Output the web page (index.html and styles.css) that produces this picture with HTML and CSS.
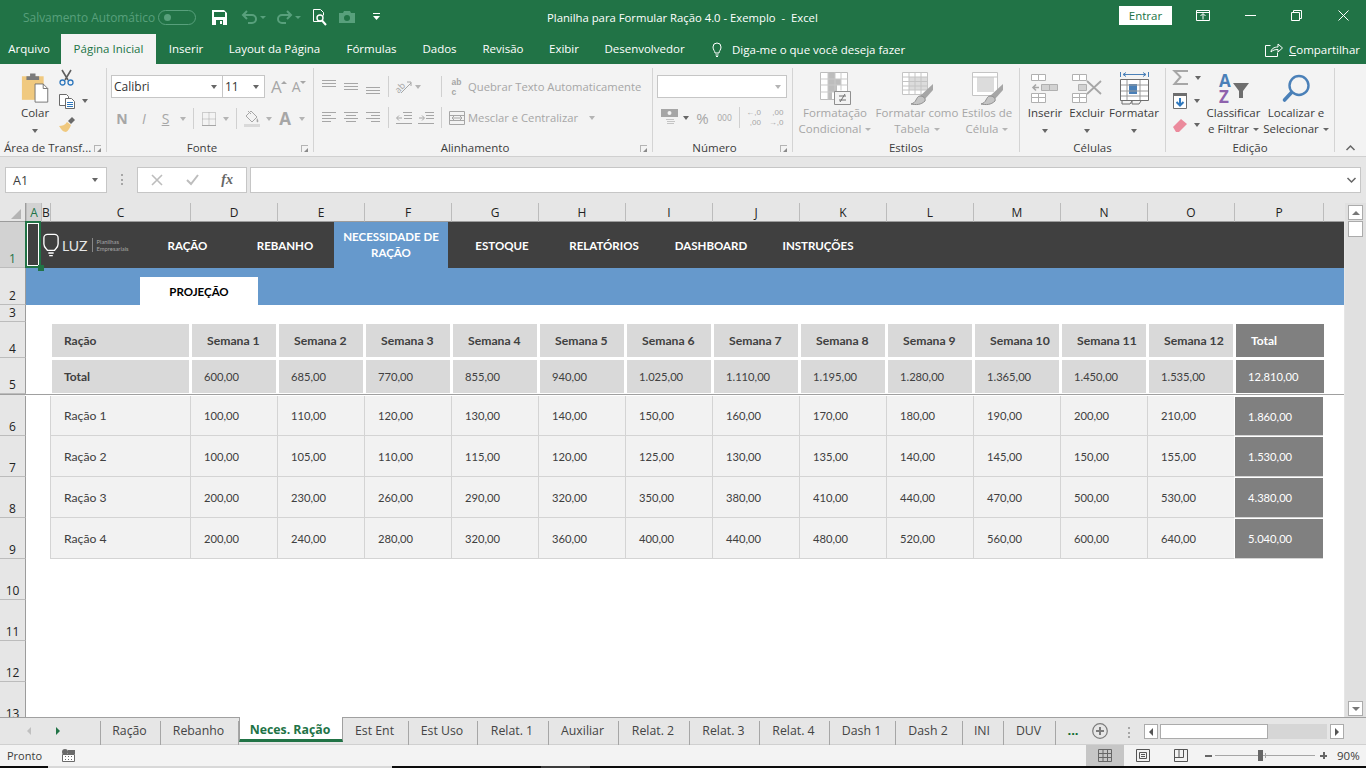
FILE: index.html
```html
<!DOCTYPE html>
<html>
  <head>
    <meta http-equiv="Content-Type" content="text/html; charset=utf-8">
    <title>Planilha para Formular Ração 4.0 - Exemplo - Excel</title>
    <link rel="stylesheet" href="styles.css">
  </head>
  <body>
    <div class="titlebar">
      <div class="quick">
        <span class="autosave">Salvamento Automático</span>
        <span class="toggle"><i></i></span>
        <svg class="q-save" width="15" height="15" viewBox="0 0 15 15"><path fill="#fff" fill-rule="evenodd" d="M0 0h12l3 3v12H0zM2 2v5h11V2zM4 10v5h7v-5zM8 11h2v3H8z"/></svg>
        <svg class="q-undo" width="17" height="14" viewBox="0 0 17 14"><path fill="none" stroke="#58a07c" stroke-width="2" d="M6 1 2 5l4 4M2 5h9a4 4 0 0 1 0 8H7"/></svg>
        <i class="caret dim q-c1"></i>
        <svg class="q-redo" width="17" height="14" viewBox="0 0 17 14"><path fill="none" stroke="#58a07c" stroke-width="2" d="m11 1 4 4-4 4M15 5H6a4 4 0 0 0 0 8h4"/></svg>
        <i class="caret dim q-c2"></i>
        <svg class="q-print" width="15" height="17" viewBox="0 0 15 17"><path fill="none" stroke="#fff" d="M9.500 12.500h-8V.5h7l3 3v3"/><circle cx="8" cy="9" r="3" fill="none" stroke="#fff" stroke-width="1.400"/><path stroke="#fff" stroke-width="2" d="m10 11.500 4 4.500"/></svg>
        <svg class="q-cam" width="16" height="12" viewBox="0 0 16 12"><path fill="#58a07c" fill-rule="evenodd" d="M0 2h4l1-2h6l1 2h4v10H0zM8 4a3 3 0 1 0 0 6 3 3 0 0 0 0-6z"/></svg>
        <svg class="q-more" width="7" height="8" viewBox="0 0 7 8"><path fill="#fff" d="M0 0h7v1H0zM0 3h7L3.500 7z"/></svg>
      </div>
      <div class="doc-title">Planilha para Formular Ração 4.0 - Exemplo&nbsp; -&nbsp; Excel</div>
      <div class="win">
        <span class="login">Entrar</span>
        <svg class="w-display" width="14" height="11" viewBox="0 0 14 11"><path fill="none" stroke="#fff" d="M.5.500h13v10H.5zM.5 2.500h13M7 9.500V4M4.500 6 7 3.500 9.500 6"/></svg>
        <svg class="w-min" width="11" height="1" viewBox="0 0 11 1"><path fill="#fff" d="M0 0h11v1H0z"/></svg>
        <svg class="w-max" width="11" height="11" viewBox="0 0 11 11"><path fill="none" stroke="#fff" d="M.5 2.500h8v8h-8zM2.500 2.500v-2h8v8h-2"/></svg>
        <svg class="w-close" width="11" height="11" viewBox="0 0 11 11"><path fill="none" stroke="#fff" d="m.5.500 10 10M10.500.500l-10 10"/></svg>
      </div>
    </div>

    <div class="menubar">
      <span class="file-tab">Arquivo</span>
      <span class="tab-on">Página Inicial</span>
      <span>Inserir</span>
      <span>Layout da Página</span>
      <span>Fórmulas</span>
      <span>Dados</span>
      <span>Revisão</span>
      <span>Exibir</span>
      <span>Desenvolvedor</span>
      <div class="tell">
        <svg width="14" height="15" viewBox="0 0 14 15"><path fill="none" stroke="#fff" d="M9 11H5c0-2-2-3-2-6a4 4 0 0 1 8 0c0 3-2 4-2 6zM5.500 13h3M6 14.500h2"/></svg>
        <span>Diga-me o que você deseja fazer</span>
      </div>
      <div class="share">
        <svg width="18" height="15" viewBox="0 0 18 15"><path fill="none" stroke="#fff" d="M5.500 3.500h-5v11h12v-4M6 10c0-3 3-5 7-5V2l4.500 4L13 10V7.500C10 7.500 8 8 6 10z"/></svg>
        <span><u>C</u>ompartilhar</span>
      </div>
    </div>

    <div class="ribbon">
      <div class="group g-clip">
        <div class="group-body clip-body">
          <div class="big colar">
            <svg width="29" height="30" viewBox="0 0 32 33"><path fill="#f0c97f" d="M1 3h24v26H1z"/><path fill="#7b7b7b" d="M6 3h14v4H6zM10 0h6v3h-6z"/><path fill="#fff" stroke="#6e6e6e" d="M15.500 11.500h9l5 5v15h-14z"/><path fill="none" stroke="#6e6e6e" d="M24.500 11.500v5h5"/></svg>
            <p>Colar</p>
            <p><i class="caret"></i></p>
          </div>
          <div class="small-col">
            <div class="small">
              <svg width="15" height="16" viewBox="0 0 15 16"><path stroke="#5e5e5e" stroke-width="1.600" d="M3 0l6 10M12 0 6 10"/><g fill="none" stroke="#2f78bd" stroke-width="1.300"><circle cx="3.500" cy="12.500" r="2.500"/><circle cx="11.500" cy="12.500" r="2.500"/></g></svg>
            </div>
            <div class="small">
              <svg width="16" height="15" viewBox="0 0 16 15"><path fill="#fff" stroke="#6a6a6a" d="M.5.500h7l2 2v9h-9z"/><path fill="#fff" stroke="#6a6a6a" d="M6.500 4.500h6l3 3v7h-9z"/><path stroke="#2f78bd" d="M8 8.500h6M8 10.500h6M8 12.500h6"/></svg>
              <i class="caret"></i>
            </div>
            <div class="small">
              <svg width="16" height="15" viewBox="0 0 16 15"><path fill="#6a6a6a" d="m9 4 4-4 3 3-4 4z"/><path fill="#f0c97f" d="M0 9c3 0 6-1 8-4l4 3c-1 3-3 6-5 7-3 0-5-3-7-6z"/></svg>
            </div>
          </div>
        </div>
        <div class="group-label label-left">Área de Transf...<i class="launch"></i></div>
      </div>

      <div class="group g-font">
        <div class="group-body rows">
          <div class="row font-row">
            <div class="combo font-name"><span>Calibri</span><i class="caret"></i></div>
            <div class="combo font-size"><span>11</span><i class="caret"></i></div>
            <div class="font-grow">
              <span class="off grow-a">A<i class="tri-grow"></i></span>
              <span class="off shrink-a">A<i class="tri-shrink"></i></span>
            </div>
          </div>
          <div class="row font-tools">
            <b class="off">N</b><em class="off">I</em><u class="off s-mark">S</u><i class="caret off"></i>
            <i class="vsep"></i>
            <svg width="14" height="14" viewBox="0 0 14 14"><path fill="none" stroke="#a6a6a6" stroke-dasharray="1 1" d="M.5.500h13v13H.5zM7 .5v13M.5 7h13"/><path stroke="#a6a6a6" d="M0 13.500h14"/></svg>
            <i class="caret off"></i>
            <i class="vsep"></i>
            <svg width="16" height="17" viewBox="0 0 16 17"><path fill="none" stroke="#a6a6a6" d="m7 1 6 6-5 5-6-6zM4 1l3 3"/><path fill="#a6a6a6" d="M13 8c1 2 2 3 1 4s-2 0-1-4z"/><path fill="#d9d9d9" d="M0 14h16v3H0z"/></svg>
            <i class="caret off"></i>
            <b class="off big-a">A</b>
            <i class="caret off"></i>
          </div>
        </div>
        <div class="group-label with-launch">Fonte<i class="launch"></i></div>
      </div>

      <div class="group g-align">
        <div class="group-body rows">
          <div class="row align-top">
            <svg class="up3" width="14" height="8" viewBox="0 0 14 8"><path stroke="#a6a6a6" d="M0 .5h14M0 3.500h14M0 6.500h14"/></svg>
            <svg width="14" height="8" viewBox="0 0 14 8"><path stroke="#a6a6a6" d="M0 .5h14M0 3.500h14M0 6.500h14"/></svg>
            <svg class="down3" width="14" height="8" viewBox="0 0 14 8"><path stroke="#a6a6a6" d="M0 .5h14M0 3.500h14M0 6.500h14"/></svg>
            <i class="vsep"></i>
            <svg width="17" height="15" viewBox="0 0 17 15"><text x="0" y="12" transform="rotate(-45 5 9)" class="orient">ab</text><path fill="none" stroke="#a6a6a6" d="M6 14 16 4M12 3h4v4"/></svg>
            <i class="caret off start"></i>
            <i class="vsep"></i>
            <span class="abc off">ab<br>c</span>
            <span class="off wrap-text">Quebrar Texto Automaticamente</span>
          </div>
          <div class="row align-bottom">
            <svg width="14" height="11" viewBox="0 0 14 11"><path stroke="#a6a6a6" d="M0 .5h14M0 3.500h9M0 6.500h14M0 9.500h9"/></svg>
            <svg width="14" height="11" viewBox="0 0 14 11"><path stroke="#a6a6a6" d="M0 .5h14M2 3.500h10M0 6.500h14M2 9.500h10"/></svg>
            <svg width="14" height="11" viewBox="0 0 14 11"><path stroke="#a6a6a6" d="M0 .5h14M5 3.500h9M0 6.500h14M5 9.500h9"/></svg>
            <i class="vsep"></i>
            <svg width="16" height="12" viewBox="0 0 16 12"><path fill="none" stroke="#a6a6a6" d="M7 .5h9M8 3.500h8M8 6.500h8M0 11.500h16M6 6H1M3 3.500 .5 6 3 8.500"/></svg>
            <svg width="16" height="12" viewBox="0 0 16 12"><path fill="none" stroke="#a6a6a6" d="M7 .5h9M8 3.500h8M8 6.500h8M0 11.500h16M1 6h5M4 3.500 6.500 6 4 8.500"/></svg>
            <i class="vsep"></i>
            <svg width="16" height="14" viewBox="0 0 16 14"><path fill="none" stroke="#a6a6a6" d="M.5.500h15v13H.5zM.5 4.500h15M.5 9.500h15M3 7h10M5 5 3 7l2 2M11 5l2 2-2 2"/></svg>
            <span class="merge off wrap-text">Mesclar e Centralizar<i class="caret off"></i></span>
          </div>
        </div>
        <div class="group-label with-launch">Alinhamento<i class="launch"></i></div>
      </div>

      <div class="group g-num">
        <div class="group-body rows">
          <div class="row num-top">
            <div class="combo num-format"><span></span><i class="caret off"></i></div>
          </div>
          <div class="row num-tools">
            <svg width="17" height="17" viewBox="0 0 17 17"><path fill="#a6a6a6" fill-rule="evenodd" d="M0 0h17v8H0zM8.500 2a2 2 0 1 0 0 4 2 2 0 0 0 0-4z"/><path stroke="#c4c4c4" d="M5 10.500h8M6 12.500h8M6 14.500h7"/></svg>
            <i class="caret"></i>
            <span class="percent off">%</span>
            <span class="zeros off">000</span>
            <i class="vsep"></i>
            <span class="decimals off">←,0<br>,00</span>
            <span class="decimals off">,00<br>→,0</span>
          </div>
        </div>
        <div class="group-label with-launch">Número<i class="launch"></i></div>
      </div>

      <div class="group g-styles">
        <div class="group-body big-row">
          <div class="big off">
            <svg width="31" height="33" viewBox="0 0 31 33"><path fill="#fff" stroke="#bdbdbd" d="M.5.500h27v27H.5z"/><path fill="#bdbdbd" d="M8 1h7v6H8zM8 7h13v6H8zM8 13h9v7H8zM8 20h4v7H8z"/><path stroke="#c9c9c9" d="M8 .5v27M15 .5v18M21 .5v18M.5 7h27M.5 13h27M.5 20h14"/><path fill="#f3f3f3" stroke="#8f8f8f" d="M14.500 19.500h16v13h-16z"/><path stroke="#6f6f6f" d="M19 24h7M19 28h7M25 22l-5 8"/></svg>
            <p>Formatação</p>
            <p>Condicional<i class="caret off mini"></i></p>
          </div>
          <div class="big off">
            <svg width="31" height="33" viewBox="0 0 31 33"><use href="#table-brush"/></svg>
            <p>Formatar como</p>
            <p>Tabela<i class="caret off mini"></i></p>
          </div>
          <div class="big off">
            <svg width="31" height="33" viewBox="0 0 31 33"><path fill="#fff" stroke="#c4c4c4" d="M.5.500h25v23H.5z"/><path fill="#dcdcdc" d="M5 5h17v15H5z"/><path stroke="#c4c4c4" d="M.5 5h25"/><use href="#brush"/></svg>
            <p>Estilos de</p>
            <p>Célula<i class="caret off mini"></i></p>
          </div>
        </div>
        <div class="group-label">Estilos</div>
      </div>

      <div class="group g-cells">
        <div class="group-body big-row">
          <div class="big">
            <svg width="28" height="29" viewBox="0 0 28 29"><g fill="#fff" stroke="#b0b0b0"><path d="M.5.500h7v6h-7zM7.500.5h7v6h-7z"/><path fill="#d2d2d2" d="M10.500 10.500h8v6h-8zM18.500 10.500h8v6h-8z"/><path d="M.5 19.500h7v4h-7zM7.500 19.500h7v4h-7zM.5 23.500h7v5h-7zM7.500 23.500h7v5h-7z"/></g><path fill="none" stroke="#a6a6a6" stroke-width="1.600" d="M8 13.500H2M5 10.500l-3 3 3 3"/></svg>
            <p>Inserir</p>
            <p><i class="caret"></i></p>
          </div>
          <div class="big">
            <svg width="30" height="29" viewBox="0 0 30 29"><g fill="#fff" stroke="#b0b0b0"><path d="M.5.500h7v6h-7zM7.500.5h7v6h-7z"/><path fill="#d2d2d2" d="M6.500 10.500h8v6h-8z"/><path d="M.5 19.500h7v4h-7zM7.500 19.500h7v4h-7zM.5 23.500h7v5h-7zM7.500 23.500h7v5h-7z"/></g><path stroke="#a6a6a6" stroke-width="1.800" d="m15 7 14 13M29 7 15 20"/></svg>
            <p>Excluir</p>
            <p><i class="caret"></i></p>
          </div>
          <div class="big">
            <svg width="29" height="33" viewBox="0 0 29 33"><path fill="none" stroke="#4a80b8" d="M.5 0v5M28.500 0v5M3 2.500h23M6 .5 3 2.500l3 2M23 .5l3 2-3 2"/><path fill="#fff" stroke="#6e6e6e" d="M.5 7.500h28v21H.5z"/><path fill="#4a80b8" d="M9 12h8v10H9z"/><path stroke="#9a9a9a" d="M7 8v20M20 8v20M1 13h27M1 19h27M1 24h27"/><path fill="none" stroke="#6e6e6e" d="M2 29v3h8l2-3M12 29v3h7l2-3"/></svg>
            <p>Formatar</p>
            <p><i class="caret"></i></p>
          </div>
        </div>
        <div class="group-label">Células</div>
      </div>

      <div class="group g-edit">
        <div class="group-body big-row">
          <div class="small-col edit-small">
            <div class="small">
              <svg width="15" height="15" viewBox="0 0 15 15"><path fill="none" stroke="#a6a6a6" stroke-width="2" d="M15 1H1.500l6 6-6 7H15"/></svg>
              <i class="caret"></i>
            </div>
            <div class="small">
              <svg width="14" height="16" viewBox="0 0 14 16"><path fill="#fff" stroke="#6e6e6e" d="M.5.500h13v15H.5z"/><path fill="#6e6e6e" d="M0 0h14v3H0z"/><path fill="none" stroke="#2f78bd" stroke-width="2" d="M7 5v7M3.500 9 7 12.500 10.500 9"/></svg>
              <i class="caret"></i>
            </div>
            <div class="small">
              <svg width="14" height="14" viewBox="0 0 14 14"><path fill="#eb8a9c" d="M0 9 8 1l6 5-8 8H3z"/></svg>
              <i class="caret"></i>
            </div>
          </div>
          <div class="big">
            <svg width="30" height="29" viewBox="0 0 30 29"><text x="0" y="13" class="az az-a">A</text><text x="0" y="29" class="az az-z">Z</text><path fill="#6e6e6e" d="M14 9h16l-6 8v7h-4v-7z"/></svg>
            <p>Classificar</p>
            <p>e Filtrar<i class="caret mini"></i></p>
          </div>
          <div class="big">
            <svg width="28" height="28" viewBox="0 0 28 28"><circle cx="17" cy="11" r="9.500" fill="none" stroke="#4a80b8" stroke-width="2.400"/><path stroke="#4a80b8" stroke-width="3.600" stroke-linecap="round" d="m9.500 18-7 7.500"/></svg>
            <p>Localizar e</p>
            <p>Selecionar<i class="caret mini"></i></p>
          </div>
        </div>
        <div class="group-label">Edição</div>
      </div>

      <svg class="collapse" width="9" height="6" viewBox="0 0 9 6"><path fill="none" stroke="#666" stroke-width="1.500" d="m.5 5 4-4 4 4"/></svg>
    </div>

    <div class="formula">
      <div class="namebox"><span>A1</span><i class="caret"></i></div>
      <span class="grip"></span>
      <div class="fx">
        <svg width="12" height="12" viewBox="0 0 12 12"><path fill="none" stroke="#bdbdbd" stroke-width="1.600" d="m1 1 10 10M11 1 1 11"/></svg>
        <svg width="13" height="12" viewBox="0 0 13 12"><path fill="none" stroke="#bdbdbd" stroke-width="2" d="m1 6 4 4 7-9"/></svg>
        <em>fx</em>
      </div>
      <div class="formula-input"><svg width="9" height="6" viewBox="0 0 9 6"><path fill="none" stroke="#666" stroke-width="1.500" d="m.5 1 4 4 4-4"/></svg></div>
    </div>

    <div class="workspace">
      <div class="sheet">
        <div class="colhead corner"><i></i></div>
        <div class="colhead col-on">A</div>
        <div class="colhead">B</div>
        <div class="colhead">C</div>
        <div class="colhead">D</div>
        <div class="colhead">E</div>
        <div class="colhead">F</div>
        <div class="colhead">G</div>
        <div class="colhead">H</div>
        <div class="colhead">I</div>
        <div class="colhead">J</div>
        <div class="colhead">K</div>
        <div class="colhead">L</div>
        <div class="colhead">M</div>
        <div class="colhead">N</div>
        <div class="colhead">O</div>
        <div class="colhead">P</div>
        <div class="colhead"></div>

        <div class="rowhead row-on">1</div>
        <div class="a1"><i></i></div>
        <div class="nav">
          <div class="logo">
            <svg width="16" height="24" viewBox="0 0 18 26"><path fill="none" stroke="#fff" stroke-width="1.500" d="M5 1h8a4 4 0 0 1 4 4v7c0 4-3 5-4 7H5c-1-2-4-3-4-7V5a4 4 0 0 1 4-4z"/><path stroke="#fff" stroke-width="1.500" d="M6 22h6M7 25h4"/></svg>
            <span class="luz">LUZ</span>
            <span class="luz-sub">Planilhas<br>Empresariais</span>
          </div>
          <span>RAÇÃO</span>
          <span class="nudge">REBANHO</span>
          <span class="nav-on">NECESSIDADE DE RAÇÃO</span>
          <span>ESTOQUE</span>
          <span>RELATÓRIOS</span>
          <span>DASHBOARD</span>
          <span>INSTRUÇÕES</span>
        </div>

        <div class="rowhead">2</div>
        <div class="subnav"><span>PROJEÇÃO</span></div>

        <div class="rowhead">3</div>

        <div class="rowhead">4</div>
        <div class="th first">Ração</div>
        <div class="th mid">Semana 1</div>
        <div class="th mid">Semana 2</div>
        <div class="th mid">Semana 3</div>
        <div class="th mid">Semana 4</div>
        <div class="th mid">Semana 5</div>
        <div class="th mid">Semana 6</div>
        <div class="th mid">Semana 7</div>
        <div class="th mid">Semana 8</div>
        <div class="th mid">Semana 9</div>
        <div class="th mid">Semana 10</div>
        <div class="th mid">Semana 11</div>
        <div class="th mid">Semana 12</div>
        <div class="th sum sum-head">Total</div>

        <div class="rowhead">5</div>
        <div class="th first">Total</div>
        <div class="th val">600,00</div>
        <div class="th val">685,00</div>
        <div class="th val">770,00</div>
        <div class="th val">855,00</div>
        <div class="th val">940,00</div>
        <div class="th val">1.025,00</div>
        <div class="th val">1.110,00</div>
        <div class="th val">1.195,00</div>
        <div class="th val">1.280,00</div>
        <div class="th val">1.365,00</div>
        <div class="th val">1.450,00</div>
        <div class="th val">1.535,00</div>
        <div class="th val sum">12.810,00</div>

        <div class="rule"></div>

        <div class="rowhead">6</div>
        <div class="td first">Ração 1</div>
        <div class="td">100,00</div>
        <div class="td">110,00</div>
        <div class="td">120,00</div>
        <div class="td">130,00</div>
        <div class="td">140,00</div>
        <div class="td">150,00</div>
        <div class="td">160,00</div>
        <div class="td">170,00</div>
        <div class="td">180,00</div>
        <div class="td">190,00</div>
        <div class="td">200,00</div>
        <div class="td">210,00</div>
        <div class="td sum">1.860,00</div>

        <div class="rowhead">7</div>
        <div class="td first">Ração 2</div>
        <div class="td">100,00</div>
        <div class="td">105,00</div>
        <div class="td">110,00</div>
        <div class="td">115,00</div>
        <div class="td">120,00</div>
        <div class="td">125,00</div>
        <div class="td">130,00</div>
        <div class="td">135,00</div>
        <div class="td">140,00</div>
        <div class="td">145,00</div>
        <div class="td">150,00</div>
        <div class="td">155,00</div>
        <div class="td sum">1.530,00</div>

        <div class="rowhead">8</div>
        <div class="td first">Ração 3</div>
        <div class="td">200,00</div>
        <div class="td">230,00</div>
        <div class="td">260,00</div>
        <div class="td">290,00</div>
        <div class="td">320,00</div>
        <div class="td">350,00</div>
        <div class="td">380,00</div>
        <div class="td">410,00</div>
        <div class="td">440,00</div>
        <div class="td">470,00</div>
        <div class="td">500,00</div>
        <div class="td">530,00</div>
        <div class="td sum">4.380,00</div>

        <div class="rowhead">9</div>
        <div class="td first">Ração 4</div>
        <div class="td">200,00</div>
        <div class="td">240,00</div>
        <div class="td">280,00</div>
        <div class="td">320,00</div>
        <div class="td">360,00</div>
        <div class="td">400,00</div>
        <div class="td">440,00</div>
        <div class="td">480,00</div>
        <div class="td">520,00</div>
        <div class="td">560,00</div>
        <div class="td">600,00</div>
        <div class="td">640,00</div>
        <div class="td sum">5.040,00</div>

        <div class="rowhead">10</div>
        <div class="rowhead">11</div>
        <div class="rowhead">12</div>
        <div class="rowhead">13</div>
      </div>
      <div class="vscroll">
        <span class="sbtn"><i class="tri-up"></i></span>
        <span class="vthumb"></span>
        <span class="sbtn sbtn-end"><i class="tri-down"></i></span>
      </div>
    </div>

    <div class="tabsbar">
      <div class="tab-nav">
        <i class="tri-left"></i>
        <i class="tri-right"></i>
      </div>
      <div class="tabs">
        <span>Ração</span>
        <span>Rebanho</span>
        <span class="sheet-on">Neces. Ração</span>
        <span>Est Ent</span>
        <span>Est Uso</span>
        <span>Relat. 1</span>
        <span>Auxiliar</span>
        <span>Relat. 2</span>
        <span>Relat. 3</span>
        <span>Relat. 4</span>
        <span>Dash 1</span>
        <span>Dash 2</span>
        <span>INI</span>
        <span>DUV</span>
      </div>
      <b class="more">...</b>
      <svg class="add" width="16" height="16" viewBox="0 0 16 16"><circle cx="8" cy="8" r="7.300" fill="none" stroke="#7b7b7b" stroke-width="1.200"/><path stroke="#7b7b7b" stroke-width="2" d="M8 4v8M4 8h8"/></svg>
      <span class="grip tab-grip"></span>
      <div class="hscroll">
        <span class="hbtn"><i class="tri-left dark"></i></span>
        <span class="hthumb"></span>
        <span class="htrack"></span>
        <span class="hbtn"><i class="tri-right dark"></i></span>
      </div>
    </div>

    <div class="statusbar">
      <span class="ready">Pronto</span>
      <svg class="macro" width="13" height="13" viewBox="0 0 13 13"><circle cx="3" cy="3" r="3" fill="#6a6a6a"/><path fill="#fff" stroke="#6a6a6a" d="M.5 5.500h12v7H.5z"/><path fill="#6a6a6a" d="M6 1h7v4H6zM3 7h1v1H3zM6 7h1v1H6zM9 7h1v1H9zM3 10h1v1H3zM6 10h1v1H6zM9 10h1v1H9z"/></svg>
      <div class="views">
        <span class="view-on"><svg width="14" height="13" viewBox="0 0 14 13"><path fill="none" stroke="#666" d="M.5.500h13v12H.5zM5 .5v12M9.500.5v12M.5 4.500h13M.5 8.500h13"/></svg></span>
        <span><svg width="14" height="13" viewBox="0 0 14 13"><path fill="none" stroke="#555" d="M.5.500h13v12H.5zM3.500 3.500h7v6h-7zM5 5.500h4M5 7.500h4"/></svg></span>
        <span><svg width="14" height="13" viewBox="0 0 14 13"><path fill="none" stroke="#555" d="M.5.500h13v12H.5zM.5 8.500h9v-8M5 .5v8"/></svg></span>
      </div>
      <div class="zoom">
        <i class="z-minus"></i>
        <div class="z-track"><i class="z-thumb"></i><i class="z-tick"></i></div>
        <i class="z-plus"></i>
        <span>90%</span>
      </div>
    </div>
    <div class="taskstrip"><i></i><i></i><i></i><i></i><i></i></div>

    <svg class="defs" width="0" height="0">
      <defs>
        <g id="brush">
          <path fill="#a6a6a6" d="M31 12v6l-8 9-5-3z"/>
          <path fill="#c4c4c4" stroke="#8f8f8f" d="M18 24c3 0 6 2 5 5-4 4-9 4-14 3 3-1 4-2 5-4s2-4 4-4z"/>
        </g>
        <g id="table-brush">
          <path fill="#fff" stroke="#c4c4c4" d="M.5.500h25v22H.5z"/>
          <path fill="#dcdcdc" d="M7 5h18v13H7z"/>
          <path stroke="#c4c4c4" d="M.5 5h25M.5 9.500h25M.5 14h25M.5 18h25M7 .5v22M13 .5v22M19 .5v22"/>
          <use href="#brush"/>
        </g>
      </defs>
    </svg>
  </body>
</html>
```

FILE: styles.css
```css
* {
  margin: 0;
  padding: 0;
  box-sizing: border-box;
  font-style: normal;
}
html, body {
  height: 100%;
}
body {
  width: 1366px;
  height: 768px;
  overflow: hidden;
  display: flex;
  flex-direction: column;
  background: #e6e6e6;
  color: #3c3c3c;
  font-family: "Open Sans", "Noto Sans", sans-serif;
  font-size: 11.5px;
}
svg {
  display: block;
  flex: none;
  overflow: visible;
}
.defs {
  position: absolute;
}
.caret {
  display: inline-block;
  flex: none;
  width: 0;
  height: 0;
  border-left: 3.5px solid transparent;
  border-right: 3.5px solid transparent;
  border-top: 4px solid #666;
}
.caret.off {
  border-top-color: #b4b4b4;
}
.caret.dim {
  border-top-color: #58a07c;
  border-left-width: 3px;
  border-right-width: 3px;
  border-top-width: 3px;
}
.caret.mini {
  margin-left: 4px;
  vertical-align: 2px;
  border-left-width: 3px;
  border-right-width: 3px;
  border-top-width: 3px;
}
.off {
  color: #a6a6a6;
}
.vsep {
  display: block;
  width: 1px;
  height: 21px;
  background: #d0d0d0;
}

/* title bar */
.titlebar {
  display: flex;
  align-items: center;
  height: 34px;
  flex: none;
  background: #217346;
  color: #fff;
}
.quick {
  display: flex;
  align-items: center;
  width: 547px;
  padding-left: 23px;
}
.autosave {
  width: 135px;
  color: #58a07c;
  font-size: 11.9px;
  white-space: nowrap;
}
.toggle {
  display: block;
  width: 38px;
  height: 15px;
  border: 1px solid #58a07c;
  border-radius: 8px;
  padding: 3px 0 0 5px;
}
.toggle i {
  display: block;
  width: 7px;
  height: 7px;
  border-radius: 50%;
  background: #58a07c;
}
.q-save { margin-left: 16px; }
.q-undo { margin-left: 14px; }
.q-c1 { margin-left: 2px; }
.q-redo { margin-left: 10px; }
.q-c2 { margin-left: 2px; }
.q-print { margin-left: 11px; }
.q-cam { margin-left: 12px; }
.q-more { margin-left: 18px; }
.doc-title {
  font-size: 11.3px;
  white-space: nowrap;
}
.win {
  display: flex;
  align-items: center;
  margin-left: auto;
}
.login {
  width: 53px;
  height: 19px;
  margin-top: -3px;
  background: #fff;
  color: #217346;
  text-align: center;
  line-height: 19px;
  font-size: 11.5px;
}
.w-display { margin-left: 24px; margin-top: -3px; }
.w-min { margin-left: 35px; margin-top: -3px; }
.w-max { margin-left: 35px; margin-top: -3px; }
.w-close { margin-left: 36px; margin-right: 17px; margin-top: -3px; }

/* menu tabs */
.menubar {
  display: grid;
  grid-template-columns: 61px 95px 60px 117px 77px 59px 68px 54px 107px 1fr auto;
  align-items: center;
  justify-items: center;
  height: 30px;
  flex: none;
  background: #217346;
  color: #fff;
  white-space: nowrap;
}
.menubar > span {
  line-height: 30px;
}
.file-tab {
  padding-right: 3px;
}
.menubar .tab-on {
  width: 100%;
  text-align: center;
  background: #f3f3f3;
  color: #217346;
}
.tell {
  display: flex;
  align-items: center;
  gap: 8px;
  justify-self: start;
  margin-left: 12px;
}
.share {
  display: flex;
  align-items: center;
  gap: 6px;
  padding-right: 6px;
}

/* ribbon */
.ribbon {
  display: flex;
  height: 93px;
  flex: none;
  padding-top: 4px;
  background: #f3f3f3;
  border-bottom: 1px solid #d0d0d0;
  position: relative;
}
.group {
  display: flex;
  flex-direction: column;
  height: 84px;
  border-right: 1px solid #d4d4d4;
}
.g-clip { width: 107px; }
.g-font { width: 207px; }
.g-align { width: 339px; }
.g-num { width: 140px; }
.g-styles { width: 227px; }
.g-cells { width: 146px; }
.g-edit { width: 169px; }
.group-body {
  flex: 1;
  min-height: 0;
}
.group-label {
  position: relative;
  height: 14px;
  line-height: 20px;
  text-align: center;
  white-space: nowrap;
}
.with-launch {
  padding-right: 16px;
}
.label-left {
  text-align: left;
  padding-left: 4px;
}
.launch {
  position: absolute;
  right: 5px;
  top: 7px;
  width: 7px;
  height: 7px;
  border-left: 1px solid #b4b4b4;
  border-top: 1px solid #b4b4b4;
}
.launch::after {
  content: "";
  position: absolute;
  right: 0;
  bottom: 0;
  width: 4px;
  height: 4px;
  background: #8a8a8a;
  clip-path: polygon(100% 0, 100% 100%, 0 100%);
}
.big {
  display: flex;
  flex-direction: column;
  align-items: center;
  padding-top: 4px;
  white-space: nowrap;
  line-height: 16px;
}
.big svg {
  height: 33px;
}
.clip-body {
  display: flex;
}
.colar {
  width: 48px;
  margin-left: 11px;
}
.small-col {
  display: flex;
  flex-direction: column;
  margin-top: -2px;
}
.small {
  display: flex;
  align-items: center;
  gap: 7px;
  height: 23.5px;
}
.rows {
  display: flex;
  flex-direction: column;
  gap: 9px;
  padding-top: 7px;
}
.row {
  display: grid;
  align-items: center;
  justify-items: center;
  white-space: nowrap;
}
.row:first-child {
  height: 23px;
}
.row:last-child {
  height: 18px;
}
.combo {
  display: flex;
  align-items: center;
  justify-content: space-between;
  height: 23px;
  background: #fff;
  border: 1px solid #c6c6c6;
  padding: 0 5px 0 2px;
  color: #333;
  font-size: 12px;
}
.font-row {
  grid-template-columns: 111px 43px auto;
  justify-content: start;
  padding-left: 4px;
}
.font-name, .font-size {
  width: 100%;
}
.font-name { border-right: 0; }
.font-grow {
  display: flex;
  gap: 5px;
  margin-left: 6px;
}
.font-grow span {
  display: flex;
  align-items: flex-end;
  line-height: 16px;
  white-space: nowrap;
}
.grow-a { font-size: 17px; }
.shrink-a { font-size: 14px; }
.tri-grow, .tri-shrink {
  display: block;
  align-self: flex-start;
  margin: 2px 0 0 -1px;
  border-left: 3px solid transparent;
  border-right: 3px solid transparent;
}
.tri-grow { border-bottom: 3px solid #a6a6a6; }
.tri-shrink { border-top: 3px solid #a6a6a6; }
.font-tools {
  grid-template-columns: 22px 22px 21px 13px 8px 23px 11px 10px 22px 11px 22px 12px;
  justify-content: start;
  padding-left: 4px;
  font-size: 14px;
}
.font-tools em {
  font-style: italic;
}
.big-a {
  font-size: 17px;
}
.align-top, .align-bottom {
  grid-template-columns: 22px 22px 22px 8px 23px 22px 8px 23px auto;
  justify-content: start;
  padding-left: 4px;
}
.start { justify-self: start; }
.up3 { margin-bottom: 6px; }
.down3 { margin-top: 8px; }
.orient {
  font-size: 9px;
  fill: #a6a6a6;
}
.abc {
  font-family: "Liberation Sans", sans-serif;
  font-size: 8.5px;
  line-height: 10px;
  font-weight: 700;
}
.wrap-text {
  font-size: 11.25px;
  justify-self: start;
}
.merge .caret {
  margin-left: 11px;
  vertical-align: 2px;
}
.num-top {
  grid-template-columns: 130px;
  padding-left: 4px;
}
.num-format { width: 100%; }
.num-tools {
  grid-template-columns: 24px 9px 25px 19px 10px 19px 26px;
  padding-left: 4px;
}
.percent { font-size: 15px; }
.zeros { font-size: 8.5px; }
.decimals {
  font-family: "Liberation Sans", sans-serif;
  font-size: 8px;
  line-height: 9.5px;
  text-align: right;
}
.big-row {
  display: grid;
}
.g-styles .big-row {
  grid-template-columns: 78px 86px 54px;
  padding-left: 3px;
}
.g-cells .big-row {
  grid-template-columns: 42px 42px 52px;
  padding-left: 4px;
}
.g-edit .big-row {
  grid-template-columns: 36px 57px 68px;
  padding-left: 3px;
}
.edit-small {
  padding-left: 4px;
}
.az {
  font-size: 17px;
  font-weight: 700;
}
.az-a { fill: #4a80b8; }
.az-z { fill: #8e62ad; }
.collapse {
  position: absolute;
  right: 11px;
  top: 81px;
}

/* formula bar */
.formula {
  display: flex;
  height: 46px;
  flex: none;
  padding: 10px 5px 10px;
  background: #e6e6e6;
}
.namebox {
  display: flex;
  align-items: center;
  justify-content: space-between;
  width: 102px;
  padding: 0 8px 0 7px;
  background: #fff;
  border: 1px solid #c6c6c6;
  font-size: 12.5px;
}
.grip {
  display: block;
  width: 2px;
  height: 11px;
  margin: 7px 14px 0;
  border-left: 2px dotted #a6a6a6;
}
.fx {
  display: flex;
  align-items: center;
  justify-content: space-between;
  width: 110px;
  padding: 0 13px;
  background: #fff;
  border: 1px solid #c6c6c6;
}
.fx em {
  font-family: "Liberation Serif", serif;
  font-style: italic;
  font-weight: 700;
  font-size: 14px;
  color: #666;
}
.formula-input {
  display: flex;
  align-items: center;
  justify-content: flex-end;
  flex: 1;
  margin-left: 3px;
  padding-right: 4px;
  background: #fff;
  border: 1px solid #c6c6c6;
}

/* sheet */
.workspace {
  display: flex;
  height: 514px;
  flex: none;
}
.sheet {
  display: grid;
  grid-template-columns: 26px 15px 9px 140px repeat(12, 87px) 89px 21px;
  grid-template-rows: 19px 46px 37px 17px 36px 36px 2px 40px repeat(7, 41px);
  width: 1344px;
  height: 514px;
  overflow: hidden;
  background: #fff;
  font-family: Lato, "Liberation Sans", sans-serif;
  color: #404040;
  font-size: 11.2px;
}
.colhead {
  display: flex;
  align-items: center;
  justify-content: center;
  background: #e6e6e6;
  border-left: 1px solid #bcbcbc;
  border-bottom: 1px solid #9c9c9c;
  font-family: "Open Sans", sans-serif;
  font-size: 12px;
  color: #222;
}
.corner {
  justify-content: flex-end;
  align-items: flex-end;
  padding: 0 4px 2px 0;
  border-left: 0;
  border-right: 1px solid #9c9c9c;
}
.corner i {
  display: block;
  width: 10px;
  height: 10px;
  background: #b4b4b4;
  clip-path: polygon(100% 0, 100% 100%, 0 100%);
}
.col-on {
  background: #d2d2d2;
  color: #217346;
}
.rowhead {
  grid-column: 1;
  display: flex;
  align-items: flex-end;
  justify-content: center;
  background: #e6e6e6;
  border-right: 1px solid #9c9c9c;
  border-bottom: 1px solid #bcbcbc;
  font-family: "Open Sans", sans-serif;
  font-size: 12px;
  line-height: 16px;
  color: #222;
}
.row-on {
  background: #d2d2d2;
  color: #217346;
}
.a1 {
  position: relative;
  background: #404040;
  border: 2px solid #217346;
  margin: -1px 0 0 -1px;
  box-shadow: inset 0 0 0 1px #fff;
}
.a1 i {
  position: absolute;
  right: -5px;
  bottom: -5px;
  width: 6px;
  height: 6px;
  background: #217346;
}
.nav {
  grid-column: 3 / -1;
  display: grid;
  grid-template-columns: 100px 93px 100px 114px 108px 96px 118px 96px 1fr;
  align-items: center;
  justify-items: center;
  background: #404040;
  color: #fff;
  font-weight: 700;
  font-size: 11.5px;
  white-space: nowrap;
}
.nudge {
  padding-left: 2px;
}
.nav-on {
  display: flex;
  align-items: center;
  justify-content: center;
  width: 100%;
  height: 100%;
  padding: 0 6px;
  white-space: normal;
  text-align: center;
  line-height: 16px;
  background: #6699cc;
}
.logo {
  display: flex;
  align-items: center;
  justify-self: start;
  padding-left: 2px;
  font-weight: 400;
}
.luz {
  margin-left: 3px;
  font-size: 14px;
  color: #e6e6e6;
}
.luz-sub {
  margin-left: 4px;
  padding-left: 4px;
  border-left: 1px solid #888;
  font-size: 5.8px;
  line-height: 7px;
  color: #a6a6a6;
}
.subnav {
  grid-column: 2 / -1;
  padding: 9px 0 0 114px;
  background: #6699cc;
}
.subnav span {
  display: block;
  width: 118px;
  height: 28px;
  background: #fff;
  color: #000;
  font-weight: 700;
  font-size: 11.5px;
  text-align: center;
  line-height: 30px;
}
.th {
  display: flex;
  align-items: center;
  background: #d9d9d9;
  border-top: 2px solid #fff;
  border-left: 2px solid #fff;
  border-right: 1px solid #fff;
  border-bottom: 1px solid #fff;
  padding-left: 12px;
  font-size: 12px;
  font-weight: 700;
  white-space: nowrap;
}
.first {
  grid-column: 4;
}
.mid {
  padding-left: 15px;
  font-size: 12.2px;
}
.val {
  font-size: 11.2px;
  font-weight: 400;
}
.sum {
  background: #808080;
  color: #fff;
}
.th.sum {
  border-right: 0;
  margin-right: -1px;
}
.sum-head {
  padding-left: 15px;
}
.rule {
  grid-column: 1 / -1;
  background: linear-gradient(#a0a0a0, #a0a0a0) top / 100% 1px no-repeat, linear-gradient(#e6e6e6, #e6e6e6) left bottom / 25px 1px no-repeat, #fff;
}
.td {
  display: flex;
  align-items: center;
  background: #f2f2f2;
  border-left: 1px solid #d4d4d4;
  border-bottom: 1px solid #d4d4d4;
  padding-left: 13px;
  white-space: nowrap;
}
.td.first {
  font-size: 12.2px;
}
.td.sum {
  background: #808080;
  border-top: 1px solid #fff;
  border-left: 1px solid #fff;
  padding-left: 13px;
}
.vscroll {
  display: flex;
  flex-direction: column;
  width: 21px;
  margin-left: 1px;
  padding: 2px 3px 1px;
  background: #e0e0e0;
}
.sbtn {
  display: flex;
  align-items: center;
  justify-content: center;
  height: 15px;
  flex: none;
  background: #fff;
  border: 1px solid #ababab;
}
.sbtn-end {
  margin-top: auto;
}
.vthumb {
  display: block;
  height: 16px;
  margin-top: 1px;
  background: #fff;
  border: 1px solid #ababab;
}
.tri-up, .tri-down {
  display: block;
  border-left: 4px solid transparent;
  border-right: 4px solid transparent;
}
.tri-up { border-bottom: 4px solid #777; }
.tri-down { border-top: 4px solid #777; }
.tri-left, .tri-right {
  display: block;
  border-top: 4px solid transparent;
  border-bottom: 4px solid transparent;
}
.tri-left { border-right: 4px solid #c0c0c0; }
.tri-right { border-left: 4px solid #217346; }
.tri-left.dark { border-right-color: #555; }
.tri-right.dark { border-left-color: #555; }

/* sheet tabs */
.tabsbar {
  display: flex;
  align-items: flex-start;
  height: 28px;
  flex: none;
  background: #e6e6e6;
  border-top: 1px solid #a0a0a0;
  border-bottom: 1px solid #d0d0d0;
}
.tab-nav {
  display: flex;
  align-items: center;
  gap: 25px;
  width: 100px;
  height: 26px;
  padding-left: 27px;
}
.tabs {
  display: grid;
  grid-template-columns: 60px 78px 104px 66px 69px 71px 70px 71px 70px 70px 66px 67px 41px 52px;
  height: 24px;
  margin-top: 3px;
  border-left: 1px solid #a6a6a6;
  font-size: 12.3px;
  color: #444;
}
.tabs span {
  padding-right: 2px;
  text-align: center;
  line-height: 19px;
  border-right: 1px solid #a6a6a6;
}
.tabs .sheet-on {
  margin-top: -4px;
  height: 25px;
  line-height: 25px;
  background: #fff;
  border-left: 1px solid #a0a0a0;
  border-right: 1px solid #a0a0a0;
  border-bottom: 3px solid #217346;
  color: #217346;
  font-weight: 700;
}
.more {
  width: 34px;
  margin-top: 3px;
  text-align: center;
  color: #0b6b2f;
  font-size: 13px;
}
.add {
  margin-top: 5px;
  margin-left: 2px;
}
.tab-grip {
  margin: 9px 14px 0 20px;
}
.hscroll {
  display: flex;
  height: 15px;
  margin-top: 6px;
  margin-left: 0;
  width: 200px;
}
.hbtn {
  display: flex;
  align-items: center;
  justify-content: center;
  width: 14px;
  background: #fff;
  border: 1px solid #ababab;
}
.hthumb {
  display: block;
  width: 108px;
  margin-left: 2px;
  background: #fff;
  border: 1px solid #ababab;
}
.htrack {
  display: block;
  width: 59px;
  margin-right: 3px;
  background: #d6d6d6;
}

/* status bar */
.statusbar {
  display: flex;
  align-items: center;
  height: 21px;
  flex: none;
  background: #f3f3f3;
}
.ready {
  width: 62px;
  padding-left: 7px;
  font-size: 11px;
}
.views {
  display: grid;
  grid-template-columns: 38px 38px 38px;
  height: 21px;
  margin-left: 1011px;
}
.views span {
  display: flex;
  align-items: center;
  justify-content: center;
}
.views .view-on {
  background: #c6c6c6;
}
.zoom {
  display: flex;
  align-items: center;
  margin-left: 5px;
}
.z-minus {
  display: block;
  width: 7px;
  height: 2px;
  background: #666;
}
.z-track {
  position: relative;
  width: 100px;
  height: 1px;
  margin: 0 5px 0 3px;
  background: #a6a6a6;
}
.z-thumb {
  position: absolute;
  left: 43px;
  top: -5px;
  width: 5px;
  height: 11px;
  background: #666;
}
.z-tick {
  position: absolute;
  left: 50px;
  top: -2px;
  width: 1px;
  height: 5px;
  background: #a6a6a6;
}
.z-plus {
  display: block;
  width: 7px;
  height: 7px;
  background: linear-gradient(#666, #666) center / 7px 2px no-repeat, linear-gradient(#666, #666) center / 2px 7px no-repeat;
}
.zoom span {
  margin-left: 10px;
}
.taskstrip {
  display: grid;
  grid-template-columns: 48px 344px 149px 49px 1fr;
  height: 2px;
  flex: none;
}
.taskstrip i:nth-child(1), .taskstrip i:nth-child(3), .taskstrip i:nth-child(5) {
  background: #0c0c0c;
}
.taskstrip i:nth-child(2) {
  background: #d8d8d8;
}
.taskstrip i:nth-child(4) {
  background: #3c3c3c;
}
```
